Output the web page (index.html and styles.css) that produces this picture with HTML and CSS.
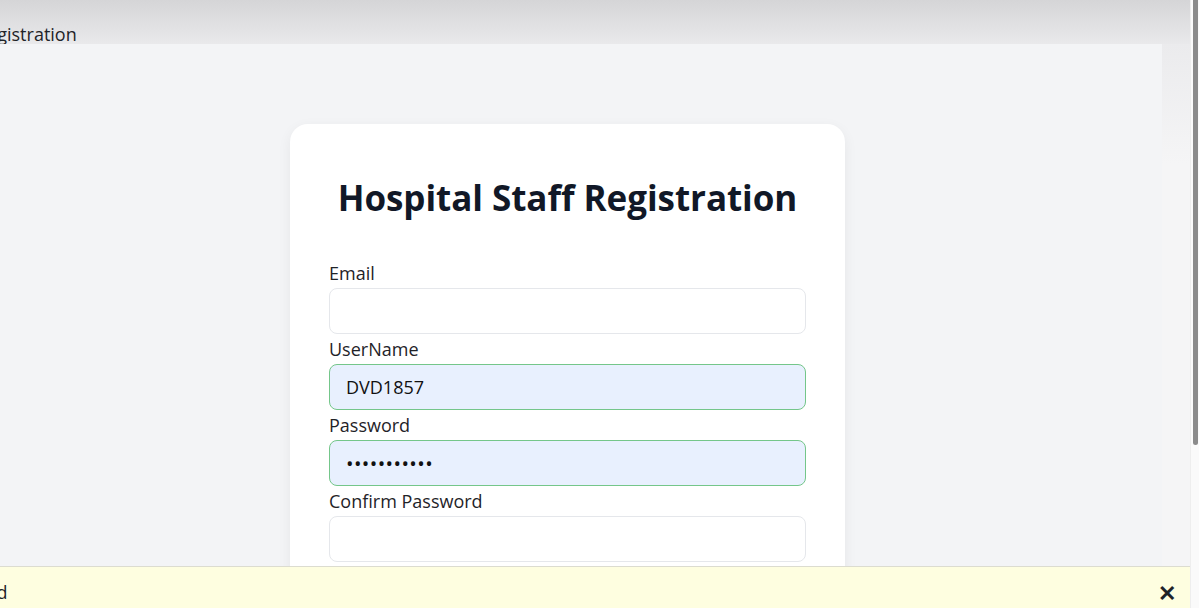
FILE: index.html
```html
<!DOCTYPE html>
<html>
<head>
<meta charset="utf-8">
<link rel="stylesheet" href="styles.css">
</head>
<body>
<div class="window">
  <div class="viewport">
    <div class="topbar"><span class="topbar-text">Registration</span></div>
    <div class="content">
      <div class="page">
        <div class="card">
          <h1 class="title">Hospital Staff Registration</h1>
          <form class="form">
            <label class="label">Email</label>
            <input class="input" type="email" value="">
            <label class="label">UserName</label>
            <input class="input filled" type="text" value="DVD1857">
            <label class="label">Password</label>
            <input class="input filled secret" type="password" value="password123">
            <label class="label">Confirm Password</label>
            <input class="input" type="password" value="">
          </form>
        </div>
      </div>
      <div class="strip"></div>
    </div>
    <div class="notice">
      <span class="notice-text">Password saved</span>
      <span class="notice-close">✕</span>
    </div>
  </div>
  <div class="scrollbar"><div class="thumb"></div></div>
</div>
</body>
</html>
```
FILE: styles.css
```css
html, body {
  margin: 0;
  padding: 0;
  height: 100%;
  overflow: hidden;
}
body {
  font-family: "Open Sans", "Noto Sans", sans-serif;
  color: #111827;
}
.window {
  display: flex;
  height: 608px;
  width: 1199px;
}
.viewport {
  width: 1190px;
  display: flex;
  flex-direction: column;
  position: relative;
  overflow: hidden;
}
.topbar {
  height: 44px;
  flex: none;
  background: linear-gradient(#d5d5d7, #e9e9eb);
  overflow: hidden;
  display: flex;
  align-items: flex-end;
}
.topbar-text {
  font-size: 18px;
  line-height: 24px;
  margin-left: -24px;
  margin-bottom: -2px;
  color: #1f2328;
}
.content {
  flex: 1;
  display: flex;
  min-height: 0;
}
.page {
  width: 1162px;
  background: #f3f4f6;
  padding: 80px 0 0 290px;
  box-sizing: border-box;
}
.strip {
  flex: 1;
  background: linear-gradient(#ebebed, #f5f5f6 120px, #f5f5f6);
}
.card {
  width: 555px;
  background: #fff;
  border-radius: 18px;
  box-shadow: 0 4px 14px rgba(0,0,0,0.06);
  padding: 50px 39px 40px;
  box-sizing: border-box;
}
.title {
  margin: 0 0 42px;
  text-align: center;
  font-size: 35px;
  line-height: 48px;
  font-weight: 700;
  color: #111827;
  letter-spacing: -0.05px;
}
.form {
  display: flex;
  flex-direction: column;
}
.label {
  font-size: 18px;
  line-height: 18px;
  margin-bottom: 6px;
  color: #1f2328;
}
.input {
  height: 46px;
  box-sizing: border-box;
  border: 1px solid #e5e7eb;
  border-radius: 8px;
  padding: 0 16px;
  font-family: inherit;
  font-size: 18px;
  color: #111;
  background: #fff;
  margin-bottom: 6px;
  outline: none;
}
.input.filled {
  background: #e8f0fe;
  border-color: #74c68a;
}
.input.secret {
  font-size: 20px;
  letter-spacing: 0.4px;
}
.notice {
  position: absolute;
  left: 0;
  right: 0;
  bottom: 0;
  height: 41px;
  background: #fefee0;
  border-top: 1px solid #dcdcd0;
  display: flex;
  align-items: center;
  justify-content: space-between;
  font-size: 18px;
}
.notice-text {
  margin-left: -127px;
  color: #1f2328;
  padding-top: 9px;
}
.notice-close {
  margin-right: 14px;
  font-size: 22px;
  font-weight: 700;
  color: #1f2328;
  padding-top: 9px;
}
.scrollbar {
  flex: 1;
  background: #fafafa;
  border-left: 1px solid #eee;
}
.thumb {
  margin: 0 1px 0 2px;
  height: 445px;
  background: #8b8b8b;
  border-radius: 0 0 3px 3px;
}
```
